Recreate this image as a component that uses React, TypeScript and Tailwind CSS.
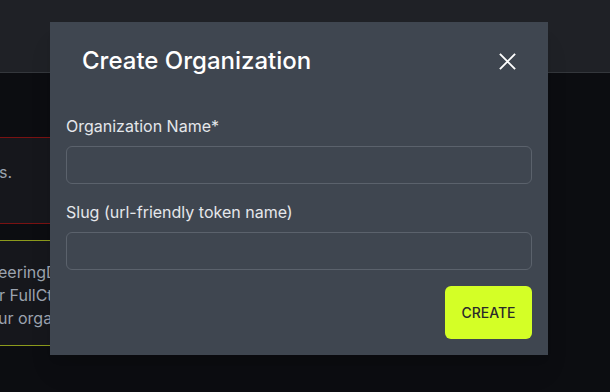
import React, { useState } from 'react';

const CloseIcon: React.FC = () => (
  <svg className="h-[19px] w-[19px]" viewBox="0 0 20 20" fill="none" stroke="currentColor" strokeWidth={2}>
    <path d="M2 2 18 18M18 2 2 18" />
  </svg>
);

const App: React.FC = () => {
  const [name, setName] = useState('');
  const [slug, setSlug] = useState('');

  return (
    <div className="relative h-[392px] w-[610px] overflow-hidden bg-[#0c0d11] font-['Inter',sans-serif]">
      {/* Top bar */}
      <div className="h-[73px] border-b border-[#34373c] bg-[#1f2126]" />

      {/* Page content behind dialog */}
      <div className="pt-[64px]">
        <div className="h-[87px] w-[300px] border-y border-[#7a1212] bg-[#16171c] pt-[22px] text-[16px] text-[#9ca3af]">
          <p className="-ml-[1px]">s.</p>
        </div>
        <div className="mt-[16px] h-[106px] w-[300px] border-y border-[#8c9a1c] bg-[#16171c] pt-[20px] text-[16px] leading-[23px] text-[#9ca3af]">
          <p className="-ml-[2px]">eeringDept</p>
          <p className="-ml-[1px]">r FullCtrl</p>
          <p className="-ml-[2px]">ur organization</p>
        </div>
      </div>

      {/* Dialog */}
      <div className="absolute left-[50px] top-[22px] flex h-[333px] w-[498px] flex-col bg-[#3f4650] px-[16px] shadow-xl">
        <div className="flex items-center justify-between pl-[16px] pr-[15px] pt-[24px]">
          <h2 className="text-[24px] font-medium leading-[30px] text-white">Create Organization</h2>
          <button type="button" className="text-white">
            <CloseIcon />
          </button>
        </div>

        <form className="mt-[38px] flex flex-col" onSubmit={(e) => e.preventDefault()}>
          <label htmlFor="org-name" className="text-[16px] leading-[24px] text-[#e5e7eb]">
            Organization Name*
          </label>
          <input
            id="org-name"
            type="text"
            value={name}
            onChange={(e) => setName(e.target.value)}
            className="mt-[8px] h-[38px] w-full rounded-[6px] border border-[#5b626c] bg-transparent px-3 text-[14px] text-white focus:outline-none"
          />

          <label htmlFor="org-slug" className="mt-[16px] text-[16px] leading-[24px] text-[#e5e7eb]">
            Slug (url-friendly token name)
          </label>
          <input
            id="org-slug"
            type="text"
            value={slug}
            onChange={(e) => setSlug(e.target.value)}
            className="mt-[8px] h-[38px] w-full rounded-[6px] border border-[#5b626c] bg-transparent px-3 text-[14px] text-white focus:outline-none"
          />

          <div className="mt-[16px] flex justify-end">
            <button
              type="submit"
              className="h-[53px] w-[87px] rounded-[6px] bg-[#d4ff26] text-[14px] font-medium text-[#2a2a2a]"
            >
              CREATE
            </button>
          </div>
        </form>
      </div>
    </div>
  );
};

export default App;
